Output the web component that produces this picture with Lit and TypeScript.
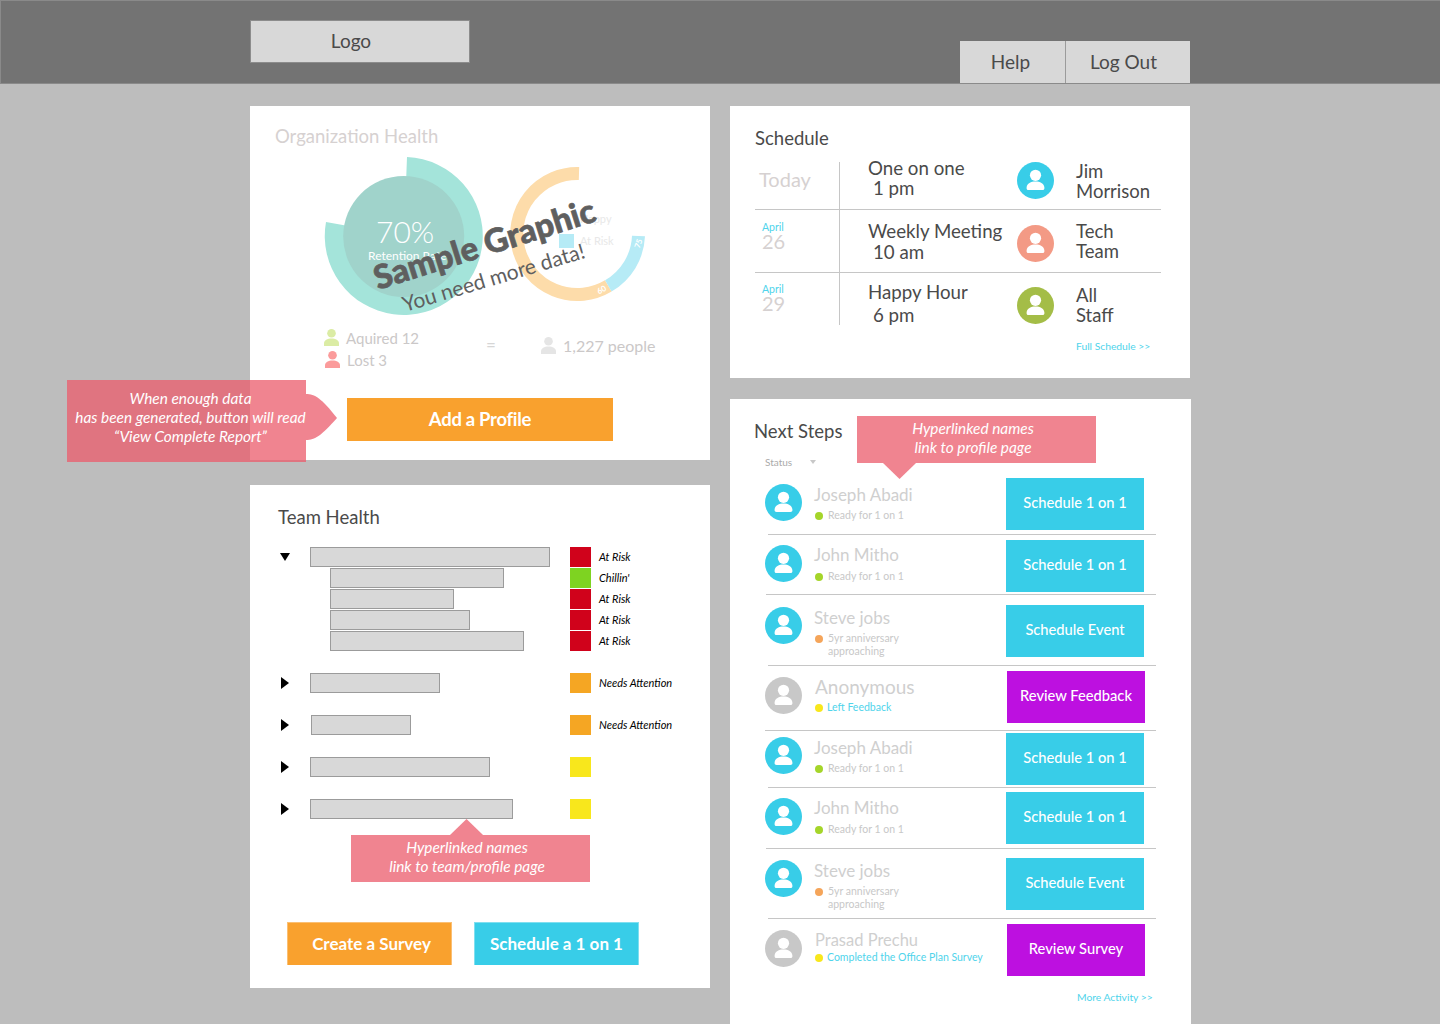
import { LitElement, html, css, svg } from "lit";
import { customElement } from "lit/decorators.js";

const personIcon = (color: string) => html`
  <svg class="avatar" viewBox="0 0 37 37">
    <circle cx="18.5" cy="18.5" r="18.5" fill=${color}></circle>
    <circle cx="18.5" cy="13.3" r="5.6" fill="#fff"></circle>
    <path d="M9.6 25.5C10 21.6 14 19.6 18.5 19.6S27 21.6 27.4 25.5C27.6 27.4 26.8 28 25.4 28H11.6C10.2 28 9.4 27.4 9.6 25.5Z" fill="#fff"></path>
  </svg>
`;

const smallPerson = (x: number, y: number, color: string) => svg`
  <g transform="translate(${x} ${y})" fill=${color}>
    <circle cx="7.5" cy="4.3" r="4.3"></circle>
    <path d="M0 17V14.5C0 11.4 3.4 9.6 7.5 9.6S15 11.4 15 14.5V17Z"></path>
  </g>
`;

const schedule = [
  { h: 47, date: "Today", eventTop: -4, lines: ["One on one", "1 pm"], lh: 20, avatarTop: 0, color: "#38cde8", nameTop: -1, names: ["Jim", "Morrison"] },
  { h: 62, month: "April", day: "26", dateTop: 12, eventTop: 11, lines: ["Weekly Meeting", "10 am"], lh: 21, avatarTop: 15, color: "#f39a85", nameTop: 11, names: ["Tech", "Team"] },
  { h: 51, month: "April", day: "29", dateTop: 11, eventTop: 8, lines: ["Happy Hour", "6 pm"], lh: 23, avatarTop: 14, color: "#a4bd47", nameTop: 12, names: ["All", "Staff"] },
];

const teamGroups = [
  {
    open: true,
    rows: [
      { w: 240, color: "#d0021b", label: "At Risk" },
      { w: 174, color: "#7ed321", label: "Chillin'", sub: true },
      { w: 124, color: "#d0021b", label: "At Risk", sub: true },
      { w: 140, color: "#d0021b", label: "At Risk", sub: true },
      { w: 194, color: "#d0021b", label: "At Risk", sub: true },
    ],
  },
  { rows: [{ w: 130, color: "#f5a623", label: "Needs Attention" }] },
  { rows: [{ w: 100, color: "#f5a623", label: "Needs Attention", nudge: true }] },
  { rows: [{ w: 180, color: "#f8e71c", label: "" }] },
  { rows: [{ w: 203, color: "#f8e71c", label: "" }] },
];

const BLUE = "#38cde8";
const PURPLE = "#bd10e0";
const GREY = "#c8c8c8";

const steps = [
  { h: 62, ruleX: 768, av: 12, btn: 6, nameTop: 13, gap: 3.5, color: BLUE, name: "Joseph Abadi", dot: "#a5d52a", sub: ["Ready for 1 on 1"], label: "Schedule 1 on 1" },
  { h: 59, ruleX: 766, av: 10, btn: 5, nameTop: 10, gap: 4.5, color: BLUE, name: "John Mitho", dot: "#a5d52a", sub: ["Ready for 1 on 1"], label: "Schedule 1 on 1" },
  { h: 70, ruleX: 768, av: 12, btn: 10, nameTop: 13, gap: 3.5, color: BLUE, name: "Steve jobs", dot: "#f5a55a", sub: ["5yr anniversary", "approaching"], label: "Schedule Event" },
  { h: 64, ruleX: 765, av: 11, btn: 5, nameTop: 11, gap: 3.5, color: GREY, name: "Anonymous", fs: 19, dot: "#f8e71c", sub: ["Left Feedback"], label: "Review Feedback", anon: true },
  { h: 56, ruleX: 768, av: 6, btn: 2, nameTop: 7, gap: 3.5, color: BLUE, name: "Joseph Abadi", dot: "#a5d52a", sub: ["Ready for 1 on 1"], label: "Schedule 1 on 1" },
  { h: 60, ruleX: 766, av: 10, btn: 4, nameTop: 10, gap: 4.5, color: BLUE, name: "John Mitho", dot: "#a5d52a", sub: ["Ready for 1 on 1"], label: "Schedule 1 on 1" },
  { h: 69, ruleX: 768, av: 11, btn: 9, nameTop: 12, gap: 3.5, color: BLUE, name: "Steve jobs", dot: "#f5a55a", sub: ["5yr anniversary", "approaching"], label: "Schedule Event" },
  { h: 60, av: 11, btn: 5, nameTop: 11, gap: 0.5, color: GREY, name: "Prasad Prechu", fs: 16.5, dot: "#f8e71c", sub: ["Completed the Office Plan Survey"], label: "Review Survey", anon: true },
];

@customElement("app-root")
export class AppRoot extends LitElement {
  static styles = css`
    :host {
      display: block;
      width: 1440px;
      height: 1024px;
      overflow: hidden;
      background: #bdbdbd;
      font-family: Lato, "Liberation Sans", sans-serif;
      color: #4a4a4a;
    }
    * {
      box-sizing: border-box;
    }

    header {
      height: 84px;
      background: #737373;
      border: 1px solid #8a8a8a;
      border-right: none;
      padding-left: 249px;
      display: flex;
      justify-content: space-between;
      padding-right: 250px;
    }
    .logo {
      width: 220px;
      height: 43px;
      margin-top: 19px;
      background: #d8d8d8;
      border: 1px solid #8c8c8c;
      font-size: 19px;
      line-height: 40px;
      text-align: center;
      padding-right: 18px;
    }
    .nav {
      display: flex;
      align-self: flex-end;
      height: 42px;
      background: #d8d8d8;
      font-size: 19px;
      line-height: 41px;
      text-align: center;
    }
    .nav div:first-child {
      width: 106px;
      padding-right: 4px;
      border-right: 1px solid #9b9b9b;
    }
    .nav div:last-child {
      width: 124px;
      padding-right: 9px;
    }

    main {
      display: grid;
      grid-template-columns: 460px 461px;
      column-gap: 20px;
      padding: 22px 0 0 250px;
    }
    .col {
      display: flex;
      flex-direction: column;
    }
    .card {
      background: #fff;
      position: relative;
    }
    h2 {
      margin: 0;
      font-size: 18.5px;
      line-height: 20px;
      font-weight: 400;
    }

    .org {
      height: 354px;
      padding: 20px 0 0 25px;
      margin-bottom: 25px;
    }
    .org h2 {
      color: #d6d1d1;
    }
    .chart {
      display: block;
      width: 410px;
      height: 250px;
      margin-top: 4px;
    }
    .chart text {
      font-family: Lato, "Liberation Sans", sans-serif;
    }
    .add {
      width: 266px;
      height: 43px;
      margin: -2px 0 0 72px;
      background: #f9a12e;
      color: #fff;
      font-size: 18.5px;
      font-weight: 700;
      line-height: 42px;
      text-align: center;
      letter-spacing: -0.3px;
    }

    .callout {
      position: absolute;
      width: 239px;
      height: 47px;
      background: #f08490;
      color: #fff;
      font-size: 15.4px;
      font-style: italic;
      line-height: 19px;
      text-align: center;
      padding-top: 3px;
      white-space: nowrap;
    }
    .callout::after {
      content: "";
      position: absolute;
      background: inherit;
    }
    .callout.left {
      left: -183px;
      top: 274px;
      height: 82px;
      background: rgba(235, 93, 109, 0.76);
      padding: 9px 0 0 8px;
    }
    .callout.left::after {
      left: 239px;
      top: 14px;
      width: 31px;
      height: 46px;
      background: #f08490;
      clip-path: path("M0 0C9 0 15 4 31 24C15 42 9 46 0 46Z");
    }
    .callout.down::after {
      left: 26px;
      top: 47px;
      width: 33px;
      height: 16px;
      clip-path: polygon(0 0, 100% 0, 50% 100%);
    }
    .callout.up::after {
      left: 99px;
      top: -16px;
      width: 33px;
      height: 16px;
      clip-path: polygon(50% 0, 100% 100%, 0 100%);
    }
    .callout.up {
      left: 101px;
      top: 350px;
      padding-right: 7px;
    }
    .callout.down {
      left: 127px;
      top: 17px;
      padding-right: 7px;
    }

    .team {
      height: 503px;
      padding: 22px 0 0 28px;
    }
    .groups {
      margin: 20px 0 0 2px;
    }
    .group {
      margin-bottom: 22px;
    }
    .team-row {
      display: flex;
      height: 20px;
      margin-bottom: 1px;
    }
    .tri-cell {
      width: 30px;
      flex: none;
    }
    .tri {
      margin-top: 6px;
      width: 0;
      height: 0;
    }
    .tri.open {
      margin-top: 6px;
      border-left: 5.5px solid transparent;
      border-right: 5.5px solid transparent;
      border-top: 8px solid #000;
    }
    .tri.closed {
      margin: 4px 0 0 1px;
      border-top: 6px solid transparent;
      border-bottom: 6px solid transparent;
      border-left: 8px solid #000;
    }
    .bar-cell {
      width: 260px;
      flex: none;
    }
    .bar {
      height: 20px;
      background: #d8d8d8;
      border: 1px solid #9b9b9b;
    }
    .bar.sub {
      margin-left: 20px;
    }
    .bar.nudge {
      margin-left: 1px;
    }
    .swatch {
      width: 21px;
      height: 20px;
      flex: none;
    }
    .status {
      margin-left: 8px;
      font-size: 11px;
      font-style: italic;
      line-height: 20px;
      color: #000;
    }
    .team-actions {
      display: flex;
      gap: 22px;
      margin: 103px 0 0 9px;
    }
    .team-actions div {
      width: 165px;
      height: 43px;
      color: #fff;
      font-size: 17px;
      font-weight: 700;
      line-height: 41px;
      text-align: center;
    }
    .team-actions .orange {
      background: #f9a12e;
      border: 1px solid #fbbf73;
      border-bottom: none;
      padding-left: 4px;
    }
    .team-actions .blue {
      background: #38cde8;
      border: 1px solid #7fdff0;
      border-bottom: none;
    }

    .sched {
      width: 460px;
      height: 272px;
      padding: 22px 0 0 25px;
      margin-bottom: 21px;
    }
    .table {
      width: 406px;
      margin-top: 14px;
    }
    .sched-row {
      display: flex;
      border-bottom: 1px solid #c6c6c6;
      font-size: 18.7px;
    }
    .sched-row:last-child {
      border-bottom: none;
    }
    .date {
      width: 85px;
      flex: none;
      border-right: 1px solid #c6c6c6;
      padding-left: 4px;
      color: #d6d1d1;
    }
    .today {
      font-size: 20px;
      line-height: 20px;
      margin-top: 7px;
    }
    .month {
      font-size: 10.5px;
      line-height: 10px;
      color: #4fd4eb;
      padding-left: 3px;
    }
    .day {
      font-size: 20px;
      line-height: 19px;
      padding-left: 3px;
    }
    .event {
      width: 177px;
      flex: none;
      padding-left: 28px;
      white-space: nowrap;
    }
    .event .time {
      padding-left: 5px;
    }
    .avatar {
      width: 37px;
      height: 37px;
      flex: none;
      display: block;
    }
    .who {
      margin-left: 22px;
      font-size: 18.5px;
      line-height: 20px;
    }
    .link {
      color: #4fd4eb;
      font-size: 10.3px;
      line-height: 12px;
    }
    .sched .link {
      margin: 15px 0 0 321px;
    }

    .next {
      height: 640px;
      padding: 22px 0 0 24px;
    }
    .status-filter {
      display: flex;
      align-items: center;
      gap: 18px;
      margin: 15px 0 0 11px;
      height: 12px;
      font-size: 10px;
      color: #aaa;
    }
    .status-filter i {
      width: 0;
      height: 0;
      border-left: 3px solid transparent;
      border-right: 3px solid transparent;
      border-top: 4px solid #c8c8c8;
    }
    .steps {
      margin-top: 4px;
    }
    .step {
      display: flex;
      width: 391px;
      margin-left: 11px;
    }
    .rule {
      height: 1px;
      background: #c6c6c6;
    }
    .step-text {
      flex: 1;
      margin-left: 12px;
    }
    .step-name {
      font-size: 17px;
      line-height: 20px;
      color: #cfcfcf;
      white-space: nowrap;
    }
    .step-sub {
      display: flex;
      font-size: 10.5px;
      line-height: 13px;
      color: #c8c8c8;
    }
    .step-sub i {
      width: 8px;
      height: 8px;
      margin: 3px 5px 0 1px;
      border-radius: 50%;
      flex: none;
    }
    .step.anon .step-text {
      margin-left: 13px;
    }
    .step.anon .step-sub {
      color: #4fd4eb;
      white-space: nowrap;
    }
    .step.anon .step-sub i {
      margin: 3px 4px 0 0;
    }
    .step-btn {
      width: 138px;
      height: 52px;
      flex: none;
      color: #fff;
      font-size: 14.7px;
      font-weight: 500;
      line-height: 49px;
      text-align: center;
    }
    .next .link {
      margin: 12px 0 0 323px;
    }
  `;

  renderChart() {
    return svg`
      <path d="M407 157A79 79 0 1 1 326 222L404 236Z" fill="#a4e4da"></path>
      <circle cx="403.7" cy="236.5" r="60.5" fill="#a0d3cb"></circle>
      <text x="376" y="243" font-size="30" font-weight="300" fill="#fff">70%</text>
      <text x="368" y="260" font-size="12" fill="#fff">Retention Rate</text>
      <path d="M579 173.5A60.5 60.5 0 1 0 608.3 285.9" fill="none" stroke="#fddcaa" stroke-width="13"></path>
      <path d="M608.3 285.9A60.5 60.5 0 0 0 638.5 236" fill="none" stroke="#b6ebf6" stroke-width="13"></path>
      <text x="597" y="293" font-size="8" font-weight="700" fill="#fff" transform="rotate(-30 601 290)">60</text>
      <text x="634" y="247" font-size="8" font-weight="700" fill="#fff" transform="rotate(-70 638 244)">75</text>
      <rect x="559" y="234" width="15" height="14" fill="#b6ebf6"></rect>
      <text x="580" y="223" font-size="11" fill="#e8e8e8">Happy</text>
      <text x="580" y="245" font-size="11" fill="#e8e8e8">At Risk</text>
      <text x="378" y="290" font-size="33" font-weight="900" fill="#5f5f5f" stroke="#5f5f5f" stroke-width="0.7" transform="rotate(-17.5 378 290)">Sample Graphic</text>
      <text x="405" y="312" font-size="21" fill="#5f5f5f" transform="rotate(-16.7 405 312)">You need more data!</text>
      ${smallPerson(324, 329, "#dbeca4")}
      ${smallPerson(325, 351, "#fb9b9b")}
      ${smallPerson(541, 337, "#e5e5e5")}
      <text x="346" y="344" font-size="15" fill="#cbc8c8">Aquired 12</text>
      <text x="347" y="366" font-size="15" fill="#cbc8c8">Lost 3</text>
      <text x="486" y="351" font-size="17" fill="#d6d6d6">=</text>
      <text x="563" y="352" font-size="16" fill="#cbc8c8">1,227 people</text>
    `;
  }

  renderSchedule() {
    return schedule.map(
      (r) => html`
        <div class="sched-row" style="height:${r.h + 1}px">
          <div class="date">
            ${r.date
              ? html`<div class="today">${r.date}</div>`
              : html`
                  <div class="month" style="margin-top:${r.dateTop}px">${r.month}</div>
                  <div class="day">${r.day}</div>
                `}
          </div>
          <div class="event" style="margin-top:${r.eventTop}px;line-height:${r.lh}px">
            <div>${r.lines[0]}</div>
            <div class="time">${r.lines[1]}</div>
          </div>
          <div style="margin-top:${r.avatarTop}px">${personIcon(r.color)}</div>
          <div class="who" style="margin-top:${r.nameTop}px">
            <div>${r.names[0]}</div>
            <div>${r.names[1]}</div>
          </div>
        </div>
      `
    );
  }

  renderTeam() {
    return teamGroups.map(
      (g) => html`
        <div class="group">
          ${g.rows.map(
            (r: any, i: number) => html`
              <div class="team-row">
                <div class="tri-cell">
                  ${i === 0 ? html`<div class="tri ${g.open ? "open" : "closed"}"></div>` : ""}
                </div>
                <div class="bar-cell">
                  <div class="bar ${r.sub ? "sub" : ""} ${r.nudge ? "nudge" : ""}" style="width:${r.w}px"></div>
                </div>
                <div class="swatch" style="background:${r.color}"></div>
                <div class="status">${r.label}</div>
              </div>
            `
          )}
        </div>
      `
    );
  }

  renderSteps() {
    return steps.map(
      (s: any) => html`
        <div class="step ${s.anon ? "anon" : ""}" style="height:${s.h}px">
          <div style="margin-top:${s.av}px">${personIcon(s.color)}</div>
          <div class="step-text" style="margin-top:${s.nameTop}px">
            <div class="step-name" style=${s.fs ? `font-size:${s.fs}px` : ""}>${s.name}</div>
            <div class="step-sub" style="margin-top:${s.gap}px">
              <i style="background:${s.dot}"></i>
              <div>${s.sub.map((l: string) => html`<div>${l}</div>`)}</div>
            </div>
          </div>
          <div
            class="step-btn"
            style="margin-top:${s.btn}px;margin-right:${s.anon ? 11 : 12}px;background:${s.anon ? PURPLE : BLUE}"
          >
            ${s.label}
          </div>
        </div>
        ${s.ruleX
          ? html`<div class="rule" style="margin-left:${s.ruleX - 754}px;width:${1156 - s.ruleX}px"></div>`
          : ""}
      `
    );
  }

  render() {
    return html`
      <header>
        <div class="logo">Logo</div>
        <div class="nav">
          <div>Help</div>
          <div>Log Out</div>
        </div>
      </header>
      <main>
        <div class="col">
          <section class="card org">
            <h2>Organization Health</h2>
            <svg class="chart" viewBox="275 150 410 250">${this.renderChart()}</svg>
            <div class="add">Add a Profile</div>
            <div class="callout left">
              When enough data<br />has been generated, button will read<br />“View Complete Report”
            </div>
          </section>
          <section class="card team">
            <h2>Team Health</h2>
            <div class="groups">${this.renderTeam()}</div>
            <div class="team-actions">
              <div class="orange">Create a Survey</div>
              <div class="blue">Schedule a 1 on 1</div>
            </div>
            <div class="callout up">Hyperlinked names<br />link to team/profile page</div>
          </section>
        </div>
        <div class="col">
          <section class="card sched">
            <h2>Schedule</h2>
            <div class="table">${this.renderSchedule()}</div>
            <div class="link">Full Schedule &gt;&gt;</div>
          </section>
          <section class="card next">
            <h2>Next Steps</h2>
            <div class="status-filter">Status <i></i></div>
            <div class="steps">${this.renderSteps()}</div>
            <div class="link">More Activity &gt;&gt;</div>
            <div class="callout down">Hyperlinked names<br />link to profile page</div>
          </section>
        </div>
      </main>
    `;
  }
}
